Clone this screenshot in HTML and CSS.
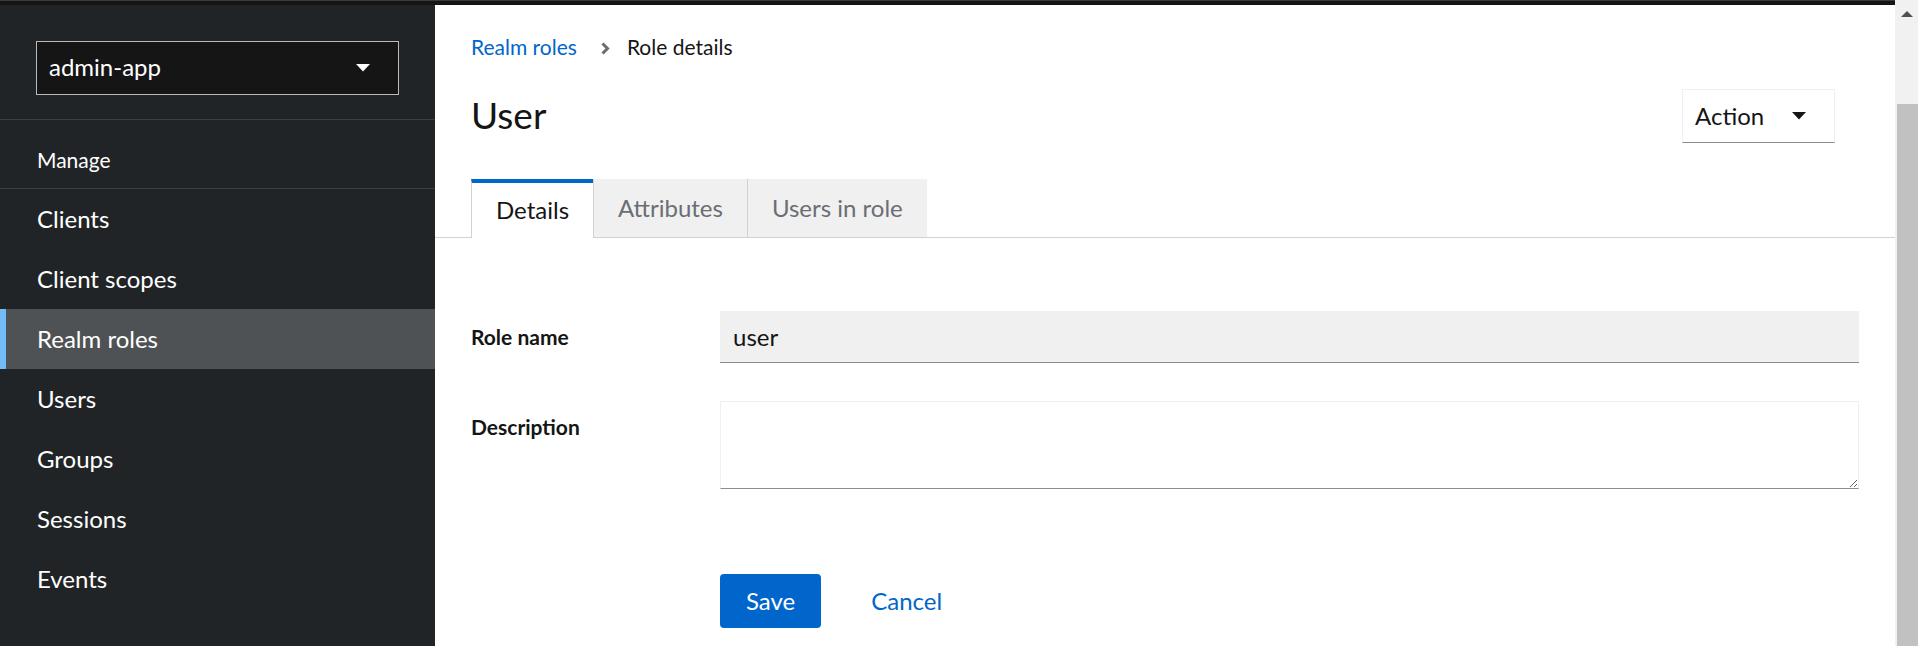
FILE: index.html
```html
<!DOCTYPE html>
<html lang="en">
<head>
<meta charset="utf-8">
<title>Role details</title>
<link rel="stylesheet" href="styles.css">
</head>
<body>
<div class="app">
  <div class="viewport">
    <div class="topbar"></div>
    <div class="page">
      <aside class="sidebar">
        <div class="realm">
          <div class="realm-select">
            <span>admin-app</span>
            <svg class="caret" width="14" height="8" viewBox="0 0 14 8"><path d="M0 0h14L7 7.5z" fill="currentColor"/></svg>
          </div>
        </div>
        <div class="section-title">Manage</div>
        <nav class="nav">
          <div class="nav-item">Clients</div>
          <div class="nav-item">Client scopes</div>
          <div class="nav-item active">Realm roles</div>
          <div class="nav-item">Users</div>
          <div class="nav-item">Groups</div>
          <div class="nav-item">Sessions</div>
          <div class="nav-item">Events</div>
        </nav>
      </aside>
      <main class="main">
        <div class="breadcrumb">
          <a class="crumb-link">Realm roles</a>
          <svg class="chevron" width="9" height="13" viewBox="0 0 9 13"><path d="M1.5 1.5l5 5-5 5" stroke="#6a6e73" stroke-width="3" fill="none"/></svg>
          <span class="crumb-current">Role details</span>
        </div>
        <div class="header">
          <h1 class="title">User</h1>
          <div class="action">
            <span>Action</span>
            <svg class="caret" width="14" height="8" viewBox="0 0 14 8"><path d="M0 0h14L7 7.5z" fill="currentColor"/></svg>
          </div>
        </div>
        <div class="tabs">
          <div class="tab active">Details</div>
          <div class="tab">Attributes</div>
          <div class="tab">Users in role</div>
        </div>
        <form class="form">
          <label class="label">Role name</label>
          <input class="input" type="text" value="user" readonly>
          <label class="label">Description</label>
          <textarea class="textarea"></textarea>
          <div class="actions">
            <button type="button" class="btn-primary">Save</button>
            <button type="button" class="btn-link">Cancel</button>
          </div>
        </form>
      </main>
    </div>
  </div>
  <div class="scrollbar">
    <div class="scroll-arrow"></div>
    <div class="scroll-thumb"></div>
  </div>
</div>
</body>
</html>
```

FILE: styles.css
```css
* { box-sizing: border-box; margin: 0; padding: 0; }
html, body { height: 100%; }
body {
  font-family: Lato, "Liberation Sans", sans-serif;
  overflow: hidden;
  background: #fff;
  color: #151515;
}
.app { display: flex; height: 646px; }
.viewport { flex: 1; display: flex; flex-direction: column; min-width: 0; }
.topbar { height: 5px; flex-shrink: 0; background: #151515; border-top: 1px solid #3a3a3a; }
.page { flex: 1; display: flex; min-height: 0; }

/* Sidebar */
.sidebar { width: 435px; flex-shrink: 0; background: #212427; color: #fff; }
.realm { padding: 36px 36px 24px 36px; border-bottom: 1px solid #3c3f42; }
.realm-select {
  width: 363px; height: 54px;
  background: #151515; border: 1px solid #b8bbbe;
  display: flex; align-items: center; justify-content: space-between;
  padding: 0 28px 3px 12px;
  font-size: 24px; color: #fff;
}
.realm-select .caret { margin-top: 3px; }
.caret { display: block; }
.section-title {
  height: 69px; padding: 26px 0 0 37px;
  font-size: 21px; line-height: 28px;
  border-bottom: 1px solid #3c3f42;
}
.nav-item {
  height: 60px; display: flex; align-items: center;
  padding: 0 0 2px 37px; font-size: 24px; color: #fff;
}
.nav-item.active { background: #4f5255; box-shadow: inset 6px 0 0 #73bcf7; }

/* Main */
.main { flex: 1; min-width: 0; padding: 28px 36px 0 36px; overflow: hidden; }
.breadcrumb { display: flex; align-items: center; font-size: 21px; line-height: 28px; }
.crumb-link { color: #06c; }
.chevron { margin: 2px 17px 0 24px; }
.crumb-current { color: #151515; }
.header { margin-top: 28px; height: 54px; display: flex; align-items: center; justify-content: space-between; }
.title { font-size: 37px; font-weight: 400; line-height: 50px; padding-bottom: 2px; }
.action {
  width: 153px; height: 54px; margin-right: 24px;
  border: 1px solid #f0f0f0; border-bottom-color: #8a8d90;
  display: flex; align-items: center; justify-content: space-between;
  padding: 0 28px 2px 12px; font-size: 24px; color: #151515;
}
.action .caret { margin-top: 2px; }
.tabs {
  margin: 36px -36px 0 -36px; padding-left: 36px;
  display: flex; height: 59px;
  border-bottom: 1px solid #d2d2d2;
}
.tab {
  height: 58px; padding: 0 24px 2px 24px;
  display: flex; align-items: center;
  background: #f0f0f0; color: #6a6e73;
  border-left: 1px solid #d2d2d2;
  font-size: 24px;
}
.tab.active {
  height: 59px; margin-bottom: -1px;
  background: #fff; color: #151515;
  border-top: 4px solid #06c;
  padding: 0 24px 2px 24px;
}

/* Form */
.form { margin-top: 73px; display: grid; grid-template-columns: 249px 1fr; row-gap: 38px; }
.label { font-size: 21px; font-weight: 700; line-height: 28px; padding-top: 12px; }
.input {
  height: 52px; width: 100%;
  background: #f0f0f0; border: none; border-bottom: 1px solid #8a8d90;
  padding: 0 13px; font-family: inherit; font-size: 24px; color: #151515;
  outline: none;
}
.textarea {
  height: 88px; width: 100%;
  border: 1px solid #f0f0f0; border-bottom-color: #8a8d90;
  font-family: inherit; font-size: 24px; padding: 8px 13px;
  resize: vertical; outline: none;
}
.actions { grid-column: 2; margin-top: 47px; display: flex; align-items: center; }
.btn-primary {
  height: 54px; padding: 0 26px 2px 26px;
  background: #06c; color: #fff; border: none; border-radius: 4px;
  font-family: inherit; font-size: 24px;
}
.btn-link {
  height: 54px; padding: 0 24px 2px 24px; margin-left: 26px;
  background: none; border: none; color: #06c;
  font-family: inherit; font-size: 24px;
}

/* Scrollbar */
.scrollbar { width: 23px; flex-shrink: 0; background: #f1f1f1; display: flex; flex-direction: column; }
.scroll-arrow {
  width: 0; height: 0; margin: 11px auto 0 auto;
  border-left: 6px solid transparent; border-right: 6px solid transparent;
  border-bottom: 6px solid #505050;
}
.scroll-thumb { flex: 1; margin: 87px 0 0 2px; background: #c1c1c1; }
```
